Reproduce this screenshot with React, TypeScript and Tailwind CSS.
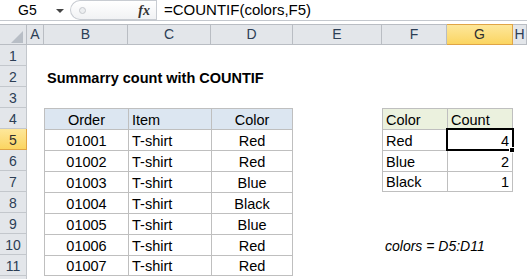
import React from 'react';

const COLS = ['', 'A', 'B', 'C', 'D', 'E', 'F', 'G', 'H'];
const ROWS = [1, 2, 3, 4, 5, 6, 7, 8, 9, 10, 11, 12];

const ORDERS = [
  ['01001', 'T-shirt', 'Red'],
  ['01002', 'T-shirt', 'Red'],
  ['01003', 'T-shirt', 'Blue'],
  ['01004', 'T-shirt', 'Black'],
  ['01005', 'T-shirt', 'Blue'],
  ['01006', 'T-shirt', 'Red'],
  ['01007', 'T-shirt', 'Red'],
];

const SUMMARY: Record<number, [string, string]> = {
  4: ['Color', 'Count'],
  5: ['Red', '4'],
  6: ['Blue', '2'],
  7: ['Black', '1'],
};

const FONT = { fontFamily: '"Liberation Sans", Arial, sans-serif' };

function cellContent(row: number, col: number): { text: string; align: string; extra?: string } | null {
  if (row === 2 && col === 2) return { text: 'Summarry count with COUNTIF', align: 'left', extra: 'font-bold' };
  if (row === 4 && col === 2) return { text: 'Order', align: 'center' };
  if (row === 4 && col === 3) return { text: 'Item', align: 'left' };
  if (row === 4 && col === 4) return { text: 'Color', align: 'center' };
  if (row >= 5 && row <= 11 && col >= 2 && col <= 4) {
    const r = ORDERS[row - 5];
    if (col === 2) return { text: r[0], align: 'center' };
    if (col === 3) return { text: r[1], align: 'left' };
    return { text: r[2], align: 'center' };
  }
  if (SUMMARY[row] && col === 6) return { text: SUMMARY[row][0], align: 'left' };
  if (SUMMARY[row] && col === 7) return { text: SUMMARY[row][1], align: row === 4 ? 'left' : 'right' };
  if (row === 10 && col === 6) return { text: 'colors = D5:D11', align: 'left', extra: 'italic text-[14px]' };
  return null;
}

function borderClass(row: number, col: number) {
  // orders table B4:D11
  if (row >= 4 && row <= 11 && col >= 2 && col <= 4) {
    const fill = row === 4 ? 'bg-[#dce6f1]' : 'bg-white';
    const r = col === 4 ? 'border-r' : '';
    const b = row === 11 ? 'border-b' : '';
    return `border-l border-t border-[#bfbfbf] ${r} ${b} ${fill}`;
  }
  // summary table F4:G7
  if (row >= 4 && row <= 7 && col >= 6 && col <= 7) {
    const fill = row === 4 ? 'bg-[#ebf1de]' : 'bg-white';
    const r = col === 7 ? 'border-r' : '';
    const b = row === 7 ? 'border-b' : '';
    return `border-l border-t border-[#bfbfbf] ${r} ${b} ${fill}`;
  }
  return '';
}

const FormulaBar = () => (
  <div className="flex h-[21px] items-stretch border-b border-[#c4c8ce] bg-white">
    <div className="relative flex w-[70px] items-center pl-[18px] text-[14px] text-black">
      G5
      <span className="absolute left-[56px] top-[9px] h-0 w-0 border-x-[4px] border-t-[4px] border-x-transparent border-t-[#444]" />
    </div>
    <div className="relative flex w-[86px] items-center justify-end rounded-l-full border border-r-0 border-[#c8ccd2] bg-gradient-to-b from-white to-[#f1f2f4] pr-[6px]">
      <span className="absolute left-[8px] top-[6px] h-[7px] w-[7px] rounded-full border border-[#c6c9ce] bg-[#eceef0]" />
      <span className="text-[14px] font-bold italic text-[#333]" style={{ fontFamily: '"Liberation Serif", serif' }}>
        fx
      </span>
    </div>
    <div className="w-px bg-[#c8ccd2]" />
    <div className="flex items-center pl-[7px] text-[15px] text-black">=COUNTIF(colors,F5)</div>
  </div>
);

export default function App() {
  return (
    <div className="h-[279px] w-[527px] overflow-hidden bg-white" style={FONT}>
      <FormulaBar />
      <div className="h-[3px] bg-white" />
      <div className="relative grid grid-cols-[27px_17px_84px_83px_82px_89px_65px_66px_14px] grid-rows-[repeat(13,21px)]">
        {/* column headers */}
        {COLS.map((c, i) =>
          i === 0 ? (
            <div key="corner" className="relative border-r border-b border-t border-[#b9bdc3] bg-[#e3e6ea]">
              <svg className="absolute left-[11px] top-[6px]" width="13" height="13" viewBox="0 0 13 13">
                <polygon points="0,12 12,12 12,0" fill="#b8bec6" />
              </svg>
            </div>
          ) : (
            <div
              key={c}
              className={`flex items-center justify-center border-r border-b border-t text-[14px] ${
                c === 'G'
                  ? 'border-[#e0a445] bg-gradient-to-b from-[#fde79a] to-[#fbd560] text-[#2f2f2f]'
                  : 'border-[#b9bdc3] bg-[#e3e6ea] text-[#2c3e55]'
              }`}
            >
              {c}
            </div>
          )
        )}
        {ROWS.map((r) => (
          <React.Fragment key={r}>
            <div
              className={`flex items-center justify-center border-r border-b pt-[2px] text-[14px] ${
                r === 5
                  ? 'border-[#e0a445] bg-gradient-to-b from-[#fde79a] to-[#fbd560] text-[#2f2f2f]'
                  : 'border-[#c3c7cc] bg-[#e3e6ea] text-[#2c3e55]'
              }`}
            >
              {r < 12 ? r : ''}
            </div>
            {COLS.slice(1).map((_, ci) => {
              const col = ci + 1;
              const content = cellContent(r, col);
              return (
                <div
                  key={col}
                  className={`relative flex items-end whitespace-nowrap px-[3px] text-[14.5px] leading-[17px] text-black ${borderClass(r, col)} ${
                    content?.align === 'center' ? 'justify-center' : content?.align === 'right' ? 'justify-end' : 'justify-start'
                  } ${content?.extra ?? ''}`}
                >
                  {content?.text}
                </div>
              );
            })}
          </React.Fragment>
        ))}
        {/* active cell G5 */}
        <div className="pointer-events-none absolute left-[446px] top-[104px] h-[23px] w-[68px] border-2 border-black" />
        <div className="pointer-events-none absolute left-[509px] top-[123px] h-[6px] w-[6px] border border-white bg-black" />
      </div>
    </div>
  );
}
